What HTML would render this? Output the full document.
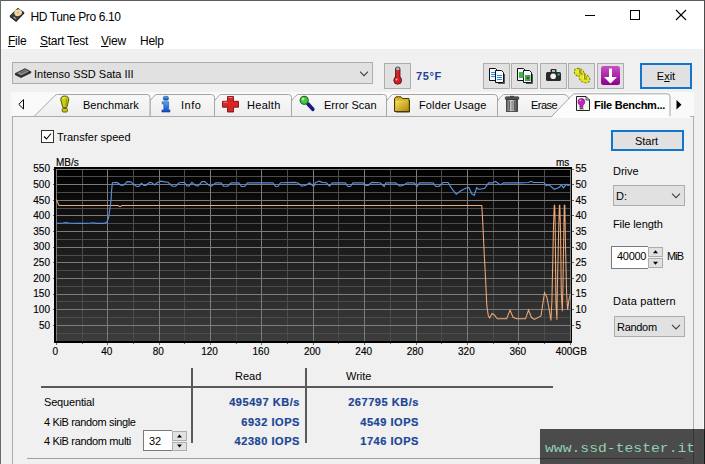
<!DOCTYPE html>
<html>
<head>
<meta charset="utf-8">
<title>HD Tune Pro 6.10</title>
<style>
html,body{margin:0;padding:0;}
body{width:705px;height:464px;overflow:hidden;background:#f0f0f0;position:relative;font-family:"Liberation Sans",sans-serif;font-size:11px;color:#000;}
.a{position:absolute;white-space:nowrap;}
.t{position:absolute;white-space:nowrap;line-height:14px;height:14px;}
#titlebar{left:0;top:0;width:705px;height:49px;background:#fff;}
#bt{left:0;top:0;width:705px;height:1px;background:#5c5c5c;}
#bl{left:0;top:0;width:1px;height:464px;background:#6a6a6a;}
#br{left:704px;top:0;width:1px;height:464px;background:#4c4c4c;}
#br2{left:703px;top:49px;width:1px;height:415px;background:#fafafa;}
.menu{font-size:12px;top:34px;letter-spacing:-0.25px;}
.combo{background:#e1e1e1;border:1px solid #adadad;box-sizing:border-box;}
.btn{background:#e1e1e1;border:1px solid #adadad;box-sizing:border-box;}
.btnb{background:#e1e1e1;border:2px solid #1276cc;box-sizing:border-box;text-align:center;}
.edit{background:#fff;border:1px solid #7a7a7a;box-sizing:border-box;}
.spin{background:#e1e1e1;border:1px solid #adadad;box-sizing:border-box;}
.ax{font-size:10px;line-height:12px;height:12px;-webkit-text-stroke:0.15px #000;}
.axl{text-align:right;width:40px;left:10px;}
.axr{text-align:left;left:575.5px;}
.axb{text-align:center;width:40px;top:346px;}
.val{font-weight:bold;color:#1c4595;-webkit-text-stroke:0.2px #1c4595;text-align:right;font-size:11px;width:100px;letter-spacing:0.55px;}
.tabt{top:98px;}
</style>
</head>
<body>
<!-- window chrome -->
<div class="a" id="titlebar"></div>
<div class="a" id="bt"></div>
<div class="a" id="bl"></div>
<div class="a" id="br"></div>
<div class="a" id="br2"></div>

<!-- title -->
<div class="t" id="title" style="left:30.5px;top:10px;font-size:12px;letter-spacing:-0.38px;">HD Tune Pro 6.10</div>
<svg class="a" style="left:0;top:0;" width="705" height="50" viewBox="0 0 705 50">
  <!-- app icon -->
  <g id="appicon">
    <path d="M9.800,15.800 L17.800,8.100 L24.200,12.300 L24.200,13.500 L16.200,22 L9.800,17 Z" fill="#1e1e1e"/>
    <path d="M9.800,15.800 L17.800,8.100 L24.200,12.300 L16.200,21 Z" fill="#3a3a3a"/>
    <ellipse cx="18.100" cy="12.700" rx="3.900" ry="3.300" fill="#f0d8a4" transform="rotate(-20 18.100 12.700)"/>
    <circle cx="18.100" cy="12.700" r="1.200" fill="#eab080"/>
    <path d="M14,16.500 L16.500,18.300 L15.500,19.300 L13,17.500 Z" fill="#9a9a9a"/>
  </g>
  <!-- caption buttons -->
  <g stroke="#000" stroke-width="1" fill="none" shape-rendering="crispEdges">
    <line x1="585" y1="15.5" x2="595" y2="15.5"/>
    <rect x="630.5" y="10.5" width="9" height="9"/>
  </g>
  <g stroke="#000" stroke-width="1.1" fill="none">
    <line x1="676" y1="10" x2="686" y2="20"/>
    <line x1="686" y1="10" x2="676" y2="20"/>
  </g>
</svg>

<!-- menu -->
<div class="t menu" style="left:8px;"><u>F</u>ile</div>
<div class="t menu" style="left:40px;"><u>S</u>tart Test</div>
<div class="t menu" style="left:101px;"><u>V</u>iew</div>
<div class="t menu" style="left:140px;">Help</div>

<!-- drive combobox -->
<div class="a combo" style="left:12px;top:62px;width:361px;height:22px;"></div>
<div class="t" id="drv" style="left:34px;top:67px;">Intenso SSD Sata III</div>

<!-- thermometer button + temp -->
<div class="a btn" style="left:384px;top:63px;width:27px;height:26px;"></div>
<div class="t" style="left:416px;top:69px;font-weight:bold;color:#1c4595;font-size:11px;letter-spacing:0.6px;">75°F</div>

<!-- toolbar buttons -->
<div class="a btn" style="left:483px;top:63px;width:27px;height:26px;"></div>
<div class="a btn" style="left:511px;top:63px;width:27px;height:26px;"></div>
<div class="a btn" style="left:540px;top:63px;width:27px;height:26px;"></div>
<div class="a btn" style="left:568px;top:63px;width:27px;height:26px;"></div>
<div class="a btn" style="left:597px;top:63px;width:27px;height:26px;"></div>

<!-- Exit -->
<div class="a btnb" style="left:640px;top:63px;width:52px;height:26px;"></div>
<div class="t" style="left:640px;top:69px;width:52px;text-align:center;">E<u>x</u>it</div>

<!-- tab strip -->
<div class="a" id="tabstrip" style="left:10px;top:92px;width:684px;height:24px;background:linear-gradient(90deg,#f3f3f3,#f9f9f9 3px);"></div>
<div class="a" id="page" style="left:12px;top:116px;width:682px;height:360px;border:1px solid #acacac;box-sizing:border-box;background:#f0f0f0;"></div>
<svg class="a" style="left:0;top:88px;" width="705" height="32" viewBox="0 88 705 32">
  <defs><linearGradient id="tg" x1="0" y1="0" x2="0" y2="1"><stop offset="0" stop-color="#f8f8f8"/><stop offset="1" stop-color="#eeeeee"/></linearGradient></defs>
  <g fill="url(#tg)" stroke="#a6a6a6" stroke-width="1">
    <path d="M497.5,116.5 L497.5,101 Q500,97 503.5,94.5 L564,94.500 Q567,94.500 568.500,97.500 L568.5,116.500 Z"/>
    <path d="M386.500,116.500 L386.500,101 Q389,97 392.500,94.500 L494.500,94.500 Q497.500,94.500 497.500,97.500 L497.500,116.500 Z"/>
    <path d="M291.500,116.500 L291.500,101 Q294,97 297.500,94.500 L383.500,94.500 Q386.500,94.500 386.500,97.500 L386.500,116.500 Z"/>
    <path d="M214.500,116.500 L214.500,101 Q217,97 220.500,94.500 L288.500,94.500 Q291.500,94.500 291.500,97.500 L291.500,116.500 Z"/>
    <path d="M150,116.500 L150,101 Q152.500,97 156,94.500 L211.500,94.500 Q214.500,94.500 214.500,97.500 L214.500,116.500 Z"/>
    <path d="M34,116.500 L55,95.500 Q56,94.500 57.500,94.500 L147,94.500 Q150,94.500 150,97.500 L150,116.500 Z"/>
  </g>
  <!-- selected tab -->
  <path d="M551.500,116.500 L572.500,94.800 Q573.500,93.800 575,93.800 L667,93.800 Q670,93.800 670,96.800 L670,116.500 Z" fill="#fcfcfc" stroke="none"/>
  <path d="M551.500,116.500 L572.500,94.800 Q573.500,93.800 575,93.800 L667,93.800 Q670,93.800 670,96.800 L670,116.500" fill="none" stroke="#a6a6a6" stroke-width="1"/>
  <!-- page top border -->
  <path d="M12,116.500 L551.500,116.500 M690,116.500 L694,116.500" stroke="#acacac" stroke-width="1" fill="none"/><path d="M670,116.500 L690,116.500" stroke="#fafafa" stroke-width="1" fill="none"/>
  <rect x="552.5" y="116" width="117" height="2" fill="#fcfcfc"/><rect x="669.5" y="117" width="23.500" height="1.200" fill="#f8f8f8"/>
  <!-- scroll arrows -->
  <path d="M23.500,99.700 L23.500,109 L18.800,104.350 Z" fill="none" stroke="#000" stroke-width="1"/>
  <path d="M676.500,100 L676.500,109.500 L681.500,104.750 Z" fill="#000"/>
</svg>
<div class="t tabt" style="left:83px;">Benchmark</div>
<div class="t tabt" style="left:181px;letter-spacing:0.5px;">Info</div>
<div class="t tabt" style="left:247px;letter-spacing:0.3px;">Health</div>
<div class="t tabt" style="left:324px;">Error Scan</div>
<div class="t tabt" style="left:419px;letter-spacing:0.12px;">Folder Usage</div>
<div class="t tabt" style="left:531px;letter-spacing:-0.55px;">Erase</div>
<div class="t tabt" style="left:594px;font-weight:bold;letter-spacing:-0.25px;">File Benchm...</div>


<!-- icons overlay -->
<svg class="a" style="left:0;top:56px;" width="705" height="62" viewBox="0 56 705 62">
  <defs>
    <linearGradient id="gy" x1="0" y1="0" x2="1" y2="1"><stop offset="0" stop-color="#f4e060"/><stop offset="1" stop-color="#b08808"/></linearGradient>
    <linearGradient id="gp" x1="0" y1="0" x2="0" y2="1"><stop offset="0" stop-color="#c850c8"/><stop offset="1" stop-color="#8a008a"/></linearGradient>
    <linearGradient id="gb" x1="0" y1="0" x2="0" y2="1"><stop offset="0" stop-color="#48b0e8"/><stop offset="1" stop-color="#1840c0"/></linearGradient>
    <linearGradient id="gt" x1="0" y1="0" x2="1" y2="0"><stop offset="0" stop-color="#555"/><stop offset="0.45" stop-color="#ddd"/><stop offset="1" stop-color="#333"/></linearGradient>
  </defs>
  <!-- drive icon in combobox -->
  <path d="M15,73.300 L25,68.300 L31.200,71.400 L31.200,73 L21,78 L15,75 Z" fill="#2e2e2e"/>
  <path d="M17,73.200 L25,69.300 L29.200,71.400 L21.200,75.400 Z" fill="#8a8a8a"/>
  <path d="M19.500,72.600 L24.800,70 L26.800,71 L21.500,73.700 Z" fill="#6a6a6a"/>
  <!-- combobox chevron -->
  <path d="M360,71.700 L364,75.700 L368,71.700" fill="none" stroke="#3c3c3c" stroke-width="1.05"/>
  <!-- thermometer -->
  <rect x="395.500" y="67" width="4.500" height="12" rx="2" fill="#d42020" stroke="#401010" stroke-width="0.8"/>
  <rect x="396" y="67.300" width="3.500" height="3" rx="1.500" fill="#78c8d8"/>
  <circle cx="397.700" cy="80.300" r="3.900" fill="#d42020" stroke="#401010" stroke-width="0.8"/>
  <rect x="396.200" y="74" width="3" height="5" fill="#d42020"/>
  <circle cx="396.500" cy="79.500" r="1" fill="#ffb0b0"/>
  <!-- copy text icon -->
  <g stroke="#111" stroke-width="1" fill="#f4f8ff">
    <path d="M489.500,68.500 L495.500,68.500 L497.500,70.500 L497.500,80.500 L489.500,80.500 Z"/>
    <path d="M495.500,70.500 L501.500,70.500 L503.500,72.500 L503.500,82.500 L495.500,82.500 Z"/>
  </g>
  <g stroke="#2a8ae0" stroke-width="1">
    <path d="M491,72.500 L495,72.500 M491,74.500 L495,74.500 M491,76.500 L495,76.500 M497,75.500 L502,75.500 M497,77.500 L502,77.500 M497,79.500 L502,79.500"/>
  </g>
  <path d="M498,83.500 L504.500,83.500 L504.500,74" stroke="#555" stroke-width="1" fill="none"/>
  <!-- copy image icon -->
  <g stroke="#111" stroke-width="1" fill="#f4f8ff">
    <path d="M517.500,68.500 L523.500,68.500 L525.500,70.500 L525.500,80.500 L517.500,80.500 Z"/>
    <path d="M523.500,70.500 L529.500,70.500 L531.500,72.500 L531.500,82.500 L523.500,82.500 Z"/>
  </g>
  <rect x="519" y="72" width="4.500" height="6" fill="#48b048"/>
  <rect x="525" y="75" width="5.500" height="6" fill="#48a048"/>
  <rect x="527" y="77" width="2" height="2" fill="#1a601a"/>
  <path d="M526,83.500 L532.500,83.500 L532.500,74" stroke="#555" stroke-width="1" fill="none"/>
  <!-- camera -->
  <rect x="546" y="72" width="15" height="9" rx="1.500" fill="#2a2a2a"/>
  <rect x="550.500" y="69" width="6" height="4" rx="1" fill="#2a2a2a"/>
  <rect x="552" y="70.200" width="3" height="1.500" fill="#e8e8e8"/>
  <circle cx="553.200" cy="76.300" r="2.800" fill="#f4f4f4"/>
  <circle cx="558.600" cy="74.500" r="1.200" fill="#20b050"/>
  <!-- yellow chips -->
  <g fill="#e4e428" stroke="#80800e" stroke-width="1" stroke-dasharray="2.2 1.2">
    <ellipse cx="579.200" cy="72.600" rx="5.300" ry="3.900" transform="rotate(28 579.200 72.600)"/>
    <ellipse cx="584.400" cy="78.300" rx="5.800" ry="4.100" transform="rotate(28 584.400 78.300)"/>
  </g>
  <path d="M579.300,68.300 L579.300,73.500 M580.800,70 L580.800,74 M584.600,74.200 L584.600,79.500 M586.100,76 L586.100,80" stroke="#80800e" stroke-width="0.9"/>
  <path d="M578.200,70 L578.200,73 M583.500,76 L583.500,79" stroke="#f8f890" stroke-width="0.8"/>
  <!-- purple download -->
  <rect x="601" y="66" width="19" height="19" rx="2.500" fill="url(#gp)"/>
  <path d="M609,68.500 L612,68.500 L612,77 L617,77 L610.500,83.500 L604,77 L609,77 Z" fill="#fff"/>
  <!-- TAB ICONS -->
  <!-- benchmark exclamation -->
  <path d="M64.700,96 Q69,96 68.700,100 L66.800,107.600 L62.800,107.600 L60.800,100 Q60.500,96 64.700,96 Z" fill="#cccc14" stroke="#5c5c08" stroke-width="1"/>
  <rect x="62.200" y="108.400" width="5.200" height="3.600" rx="1.200" fill="#cccc14" stroke="#5c5c08" stroke-width="1"/>
  <path d="M63,99 Q63.300,97.400 65,97.500" stroke="#f4f49a" stroke-width="1.100" fill="none"/>
  <path d="M66.800,99 L65.800,106.500" stroke="#9a9a0c" stroke-width="1.200" fill="none"/>
  <!-- info i -->
  <rect x="163.300" y="96.300" width="5.200" height="4" rx="1.600" fill="url(#gb)" stroke="#1838a0" stroke-width="0.5"/>
  <path d="M162.200,101.700 L168.600,101.700 L168.600,109.900 L170,109.900 L170,112.100 L161.900,112.100 L161.900,109.900 L163.800,109.900 L163.800,103.900 L162.200,103.900 Z" fill="url(#gb)" stroke="#1838a0" stroke-width="0.5"/>
  <!-- health cross -->
  <path d="M227.500,96.500 L233.500,96.500 L233.500,101.300 L238.500,101.300 L238.500,107.200 L233.500,107.200 L233.500,112 L227.500,112 L227.500,107.200 L222.500,107.200 L222.500,101.300 L227.500,101.300 Z" fill="#d82424" stroke="#7a1010" stroke-width="0.9"/>
  <path d="M228.500,97.500 L232.500,97.500 M223.500,102.300 L227.500,102.300" stroke="#f08080" stroke-width="1"/>
  <!-- error scan magnifier -->
  <path d="M307.800,103.800 L312.800,109.300" stroke="#1a1a80" stroke-width="3.600" stroke-linecap="round"/>
  <circle cx="304.200" cy="100.300" r="4" fill="#48c848" stroke="#207020" stroke-width="1.200"/>
  <circle cx="303" cy="99" r="1.400" fill="#a8f0a8"/>
  <!-- folder -->
  <path d="M394.500,98.500 L396,96.800 L401,96.800 L402.500,98.500 L409,98.500 L409,111.500 L394.500,111.500 Z" fill="#d8b020" stroke="#4a3808" stroke-width="1"/>
  <rect x="395.500" y="100.500" width="13" height="10.500" fill="url(#gy)"/>
  <path d="M409.500,100 L409.500,112 L396,112" stroke="#4a3808" stroke-width="1" fill="none"/>
  <!-- trash -->
  <rect x="506.500" y="99.500" width="11" height="12" fill="url(#gt)" stroke="#333" stroke-width="0.8"/>
  <rect x="505.300" y="96.800" width="13.500" height="2.700" rx="0.800" fill="#555" stroke="#222" stroke-width="0.6"/>
  <rect x="510" y="95.800" width="4" height="1.400" fill="#444"/>
  <path d="M509.500,101 L509.500,110.500 M512,101 L512,110.500 M514.500,101 L514.500,110.500" stroke="#444" stroke-width="0.7"/>
  <!-- file benchmark page+bulb -->
  <path d="M576.500,96.500 L586,96.500 L589.500,100 L589.500,110.500 L576.500,110.500 Z" fill="#f6f6f0" stroke="#222" stroke-width="1"/>
  <path d="M586,96.500 L586,100 L589.500,100" fill="none" stroke="#222" stroke-width="0.8"/>
  <path d="M581.400,98.500 Q584.700,98.500 584.700,101.800 Q584.700,104 582.900,105.300 L582.900,107.300 L579.900,107.300 L579.900,105.300 Q578.100,104 578.100,101.800 Q578.100,98.500 581.400,98.500 Z" fill="#c424c4" stroke="#6a0a6a" stroke-width="0.7"/>
  <rect x="579.500" y="108" width="4" height="1.300" fill="#555"/>
  <circle cx="580.300" cy="100.300" r="0.900" fill="#f0a0f0"/>
</svg>

<!-- checkbox -->
<div class="a" style="left:41px;top:130px;width:13px;height:13px;box-sizing:border-box;border:1px solid #333;background:#fff;"></div>
<svg class="a" style="left:41px;top:130px;" width="13" height="13" viewBox="0 0 13 13"><path d="M3,6.500 L5.500,9 L10,3.500" fill="none" stroke="#000" stroke-width="1.1"/></svg>
<div class="t" style="left:57px;top:130px;">Transfer speed</div>

<!-- chart -->
<div class="a" id="chart" style="left:54px;top:167px;width:518px;height:176px;background:linear-gradient(#000,#3d3d3d);"></div>
<div class="t ax" style="left:56px;top:156.700px;">MB/s</div>
<div class="t ax" style="left:556px;top:156.700px;">ms</div>
<svg class="a" style="left:0;top:0;" width="705" height="464" viewBox="0 0 705 464">
<g stroke-width="1" shape-rendering="crispEdges"><g stroke="#4c4c4c"><line x1="82.5" y1="169" x2="82.5" y2="341.5"/><line x1="133.5" y1="169" x2="133.5" y2="341.5"/><line x1="184.5" y1="169" x2="184.5" y2="341.5"/><line x1="236.5" y1="169" x2="236.5" y2="341.5"/><line x1="287.5" y1="169" x2="287.5" y2="341.5"/><line x1="338.5" y1="169" x2="338.5" y2="341.5"/><line x1="390.5" y1="169" x2="390.5" y2="341.5"/><line x1="441.5" y1="169" x2="441.5" y2="341.5"/><line x1="493.5" y1="169" x2="493.5" y2="341.5"/><line x1="544.5" y1="169" x2="544.5" y2="341.5"/><line x1="56" y1="333.5" x2="571" y2="333.5"/><line x1="56" y1="317.5" x2="571" y2="317.5"/><line x1="56" y1="301.5" x2="571" y2="301.5"/><line x1="56" y1="286.5" x2="571" y2="286.5"/><line x1="56" y1="270.5" x2="571" y2="270.5"/><line x1="56" y1="255.5" x2="571" y2="255.5"/><line x1="56" y1="239.5" x2="571" y2="239.5"/><line x1="56" y1="223.5" x2="571" y2="223.5"/><line x1="56" y1="208.5" x2="571" y2="208.5"/><line x1="56" y1="192.5" x2="571" y2="192.5"/><line x1="56" y1="176.5" x2="571" y2="176.5"/></g><g stroke="#7c7c7c"><line x1="56.5" y1="169" x2="56.5" y2="341.5"/><line x1="107.5" y1="169" x2="107.5" y2="341.5"/><line x1="159.5" y1="169" x2="159.5" y2="341.5"/><line x1="210.5" y1="169" x2="210.5" y2="341.5"/><line x1="261.5" y1="169" x2="261.5" y2="341.5"/><line x1="313.5" y1="169" x2="313.5" y2="341.5"/><line x1="364.5" y1="169" x2="364.5" y2="341.5"/><line x1="416.5" y1="169" x2="416.5" y2="341.5"/><line x1="467.5" y1="169" x2="467.5" y2="341.5"/><line x1="518.5" y1="169" x2="518.5" y2="341.5"/><line x1="570.5" y1="169" x2="570.5" y2="341.5"/><line x1="56" y1="325.5" x2="571" y2="325.5"/><line x1="56" y1="309.5" x2="571" y2="309.5"/><line x1="56" y1="294.5" x2="571" y2="294.5"/><line x1="56" y1="278.5" x2="571" y2="278.5"/><line x1="56" y1="262.5" x2="571" y2="262.5"/><line x1="56" y1="247.5" x2="571" y2="247.5"/><line x1="56" y1="231.5" x2="571" y2="231.5"/><line x1="56" y1="215.5" x2="571" y2="215.5"/><line x1="56" y1="200.5" x2="571" y2="200.5"/><line x1="56" y1="184.5" x2="571" y2="184.5"/><line x1="56" y1="169.5" x2="571" y2="169.5"/></g><rect x="54" y="340.6" width="518" height="2.4" fill="#000" stroke="none"/><rect x="54" y="167" width="2" height="176" fill="#000" stroke="none"/><rect x="571" y="167" width="1" height="176" fill="#000" stroke="none"/><g stroke="#666"><line x1="56.5" y1="343" x2="56.5" y2="345.0"/><line x1="82.5" y1="343" x2="82.5" y2="344.0"/><line x1="107.5" y1="343" x2="107.5" y2="345.0"/><line x1="133.5" y1="343" x2="133.5" y2="344.0"/><line x1="159.5" y1="343" x2="159.5" y2="345.0"/><line x1="184.5" y1="343" x2="184.5" y2="344.0"/><line x1="210.5" y1="343" x2="210.5" y2="345.0"/><line x1="236.5" y1="343" x2="236.5" y2="344.0"/><line x1="261.5" y1="343" x2="261.5" y2="345.0"/><line x1="287.5" y1="343" x2="287.5" y2="344.0"/><line x1="313.5" y1="343" x2="313.5" y2="345.0"/><line x1="338.5" y1="343" x2="338.5" y2="344.0"/><line x1="364.5" y1="343" x2="364.5" y2="345.0"/><line x1="390.5" y1="343" x2="390.5" y2="344.0"/><line x1="416.5" y1="343" x2="416.5" y2="345.0"/><line x1="441.5" y1="343" x2="441.5" y2="344.0"/><line x1="467.5" y1="343" x2="467.5" y2="345.0"/><line x1="493.5" y1="343" x2="493.5" y2="344.0"/><line x1="518.5" y1="343" x2="518.5" y2="345.0"/><line x1="544.5" y1="343" x2="544.5" y2="344.0"/><line x1="570.5" y1="343" x2="570.5" y2="345.0"/><line x1="52.5" y1="325.5" x2="54" y2="325.5"/><line x1="572" y1="325.5" x2="573.5" y2="325.5"/><line x1="52.5" y1="309.5" x2="54" y2="309.5"/><line x1="572" y1="309.5" x2="573.5" y2="309.5"/><line x1="52.5" y1="294.5" x2="54" y2="294.5"/><line x1="572" y1="294.5" x2="573.5" y2="294.5"/><line x1="52.5" y1="278.5" x2="54" y2="278.5"/><line x1="572" y1="278.5" x2="573.5" y2="278.5"/><line x1="52.5" y1="262.5" x2="54" y2="262.5"/><line x1="572" y1="262.5" x2="573.5" y2="262.5"/><line x1="52.5" y1="247.5" x2="54" y2="247.5"/><line x1="572" y1="247.5" x2="573.5" y2="247.5"/><line x1="52.5" y1="231.5" x2="54" y2="231.5"/><line x1="572" y1="231.5" x2="573.5" y2="231.5"/><line x1="52.5" y1="215.5" x2="54" y2="215.5"/><line x1="572" y1="215.5" x2="573.5" y2="215.5"/><line x1="52.5" y1="200.5" x2="54" y2="200.5"/><line x1="572" y1="200.5" x2="573.5" y2="200.5"/><line x1="52.5" y1="184.5" x2="54" y2="184.5"/><line x1="572" y1="184.5" x2="573.5" y2="184.5"/><line x1="52.5" y1="169.5" x2="54" y2="169.5"/><line x1="572" y1="169.5" x2="573.5" y2="169.5"/></g></g>
<path d="M56.0,199.5 L57.5,202.0 L59.0,205.5 L118.0,205.5 L120.0,206.6 L122.0,205.5 L460.0,205.5 L481.8,205.5 L482.7,221.2 L484.2,253.3 L485.6,279.5 L486.8,305.7 L488.3,315.9 L489.7,317.9 L492.0,313.6 L494.4,315.0 L497.3,318.8 L506.6,318.8 L510.1,310.1 L513.0,317.3 L516.8,318.8 L525.5,318.8 L528.5,310.1 L531.4,317.3 L534.3,319.4 L541.0,315.9 L544.5,292.6 L546.8,297.0 L548.8,307.1 L550.9,320.5 L551.9,301.3 L552.8,260.0 L553.5,225.0 L554.3,205.2 L554.7,205.2 L555.2,225.0 L555.9,302.7 L556.9,319.7 L557.3,290.6 L558.0,260.0 L558.8,225.0 L559.4,205.2 L559.8,205.2 L560.5,230.0 L561.3,292.7 L562.3,311.2 L563.0,284.2 L563.5,250.0 L564.3,205.2 L564.8,205.2 L565.6,250.0 L566.6,292.7 L567.6,309.8 L569.0,299.8 L570.5,294.1" fill="none" stroke="#eea876" stroke-width="1.05"/>
<path d="M56.0,223.4 L62.0,223.2 L66.0,222.6 L70.0,223.3 L80.0,223.4 L90.0,223.3 L93.0,222.8 L96.0,223.3 L104.0,223.3 L106.7,222.5 L108.5,218.0 L110.0,208.0 L111.1,200.0 L111.6,190.4 L112.4,182.8 L117.0,182.4 L121.3,185.3 L123.8,185.0 L127.2,181.6 L130.6,181.9 L134.0,184.5 L136.6,186.5 L138.8,186.5 L141.4,183.3 L143.9,185.3 L146.0,185.3 L149.4,182.4 L151.9,182.8 L154.5,185.0 L157.0,182.8 L160.9,181.1 L164.7,181.9 L168.1,182.3 L172.3,186.2 L175.7,186.2 L179.1,182.8 L184.3,182.3 L186.8,185.7 L188.9,186.2 L191.9,182.3 L195.3,185.3 L197.9,186.2 L202.1,181.6 L204.7,181.6 L208.9,185.3 L211.5,186.2 L215.7,182.8 L221.0,182.8 L223.5,186.2 L227.8,186.2 L231.2,182.8 L238.8,182.8 L241.4,186.5 L244.8,186.5 L247.3,182.8 L272.9,182.8 L275.4,186.5 L278.0,186.5 L280.5,182.8 L295.0,182.4 L298.4,183.3 L301.8,186.2 L306.0,185.3 L309.5,182.8 L313.7,186.5 L315.4,182.8 L319.2,181.1 L322.2,182.4 L326.5,182.8 L329.4,186.2 L332.4,182.8 L345.3,182.8 L347.9,186.5 L350.4,186.5 L353.0,182.8 L363.2,182.8 L365.7,185.3 L368.3,185.3 L371.7,182.4 L380.2,182.8 L384.1,186.5 L385.8,182.8 L395.5,182.8 L399.8,186.2 L403.2,185.3 L407.4,182.8 L414.3,182.8 L417.1,186.5 L419.4,182.8 L433.0,182.8 L435.9,186.5 L438.9,186.5 L443.0,182.5 L448.0,182.5 L452.0,188.9 L456.3,194.2 L460.8,190.8 L465.8,188.3 L468.8,187.5 L471.8,193.8 L474.2,195.4 L476.7,187.5 L478.7,189.5 L484.7,188.3 L488.6,182.9 L492.6,182.9 L495.6,181.5 L500.6,184.9 L503.5,182.9 L519.4,182.9 L528.4,182.5 L531.3,181.3 L533.3,182.5 L544.2,182.5 L546.2,185.5 L549.2,184.9 L554.2,189.3 L559.1,187.5 L561.5,184.9 L563.5,187.9 L566.1,184.3 L568.1,185.5 L570.5,184.3" fill="none" stroke="#5b8fdc" stroke-width="1.15"/>
</svg><div class="t ax axl" style="top:319.6px;">50</div><div class="t ax axr" style="top:319.6px;">5</div><div class="t ax axl" style="top:304.0px;">100</div><div class="t ax axr" style="top:304.0px;">10</div><div class="t ax axl" style="top:288.3px;">150</div><div class="t ax axr" style="top:288.3px;">15</div><div class="t ax axl" style="top:272.7px;">200</div><div class="t ax axr" style="top:272.7px;">20</div><div class="t ax axl" style="top:257.1px;">250</div><div class="t ax axr" style="top:257.1px;">25</div><div class="t ax axl" style="top:241.4px;">300</div><div class="t ax axr" style="top:241.4px;">30</div><div class="t ax axl" style="top:225.8px;">350</div><div class="t ax axr" style="top:225.8px;">35</div><div class="t ax axl" style="top:210.2px;">400</div><div class="t ax axr" style="top:210.2px;">40</div><div class="t ax axl" style="top:194.5px;">450</div><div class="t ax axr" style="top:194.5px;">45</div><div class="t ax axl" style="top:178.9px;">500</div><div class="t ax axr" style="top:178.9px;">50</div><div class="t ax axl" style="top:163.3px;">550</div><div class="t ax axr" style="top:163.3px;">55</div><div class="t ax axb" style="left:35.4px;">0</div><div class="t ax axb" style="left:86.8px;">40</div><div class="t ax axb" style="left:138.2px;">80</div><div class="t ax axb" style="left:189.5px;">120</div><div class="t ax axb" style="left:240.9px;">160</div><div class="t ax axb" style="left:292.3px;">200</div><div class="t ax axb" style="left:343.7px;">240</div><div class="t ax axb" style="left:395.1px;">280</div><div class="t ax axb" style="left:446.4px;">320</div><div class="t ax axb" style="left:497.8px;">360</div><div class="t ax" style="left:555.7px;top:346px;">400GB</div>

<!-- right panel -->
<div class="a btnb" style="left:611px;top:130px;width:73px;height:21px;"></div>
<div class="t" style="left:610px;top:134px;width:73px;text-align:center;">Start</div>
<div class="t" style="left:613px;top:164px;">Drive</div>
<div class="a combo" style="left:613px;top:185px;width:72px;height:21px;"></div>
<div class="t" style="left:616px;top:189px;">D:</div>
<div class="t" style="left:613px;top:217px;letter-spacing:-0.1px;">File length</div>
<div class="a edit" style="left:611px;top:246px;width:37px;height:23px;border-right:none;"></div>
<div class="t" style="left:617px;top:249px;letter-spacing:-0.3px;">40000</div>
<div class="a spin" style="left:648px;top:247px;width:15px;height:10px;"></div>
<div class="a spin" style="left:648px;top:258px;width:15px;height:10px;"></div>
<div class="t" style="left:667px;top:249px;letter-spacing:-0.9px;">MiB</div>
<div class="t" style="left:613px;top:294px;letter-spacing:0.2px;">Data pattern</div>
<div class="a combo" style="left:614px;top:316px;width:71px;height:21px;"></div>
<div class="t" style="left:617px;top:320px;letter-spacing:-0.3px;">Random</div>

<!-- results table -->
<div class="a" style="left:41px;top:386px;width:512px;height:2px;background:#5a5a5a;"></div>
<div class="a" style="left:191px;top:368px;width:2px;height:75px;background:#5a5a5a;"></div>
<div class="a" style="left:305px;top:368px;width:2px;height:75px;background:#5a5a5a;"></div>
<div class="t" style="left:235px;top:369px;">Read</div>
<div class="t" style="left:346px;top:369px;">Write</div>
<div class="t" style="left:44px;top:395px;letter-spacing:-0.17px;">Sequential</div>
<div class="t" style="left:44px;top:415px;letter-spacing:-0.36px;">4 KiB random single</div>
<div class="t" style="left:44px;top:434px;letter-spacing:-0.34px;">4 KiB random multi</div>
<div class="a edit" style="left:143px;top:430px;width:29px;height:21px;border-right:none;"></div>
<div class="t" style="left:149px;top:434px;">32</div>
<div class="a spin" style="left:172px;top:431px;width:15px;height:10px;"></div>
<div class="a spin" style="left:172px;top:442px;width:15px;height:9px;"></div>
<div class="t val" style="left:200px;top:395px;"><span class="vs">495497 KB/s</span></div>
<div class="t val" style="left:200px;top:415px;"><span class="vs">6932 IOPS</span></div>
<div class="t val" style="left:200px;top:434px;"><span class="vs">42380 IOPS</span></div>
<div class="t val" style="left:319px;top:395px;"><span class="vs">267795 KB/s</span></div>
<div class="t val" style="left:319px;top:415px;"><span class="vs">4549 IOPS</span></div>
<div class="t val" style="left:319px;top:434px;"><span class="vs">1746 IOPS</span></div>
<div class="a" style="left:27px;top:458px;width:657px;height:1px;background:#a0a0a0;"></div>


<svg class="a" style="left:600px;top:120px;" width="105" height="230" viewBox="600 120 105 230">
  <path d="M672,193.700 L676,197.700 L680,193.700" fill="none" stroke="#3c3c3c" stroke-width="1.05"/>
  <path d="M672,324.900 L676,328.900 L680,324.900" fill="none" stroke="#3c3c3c" stroke-width="1.05"/>
  <path d="M653,253.300 L655.500,250.300 L658,253.300 Z" fill="#000"/>
  <path d="M653,261.700 L655.500,264.700 L658,261.700 Z" fill="#000"/>
</svg>
<svg class="a" style="left:170px;top:428px;" width="20" height="26" viewBox="170 428 20 26">
  <path d="M177,437.500 L179.500,434.500 L182,437.500 Z" fill="#000"/>
  <path d="M177,444.500 L179.500,447.500 L182,444.500 Z" fill="#000"/>
</svg>

<!-- watermark -->
<div class="a" style="left:540px;top:429px;width:165px;height:35px;background:rgba(0,0,0,0.69);"></div>
<div class="t" id="wm" style="left:545px;top:438.6px;font-family:'Liberation Mono',monospace;font-size:13px;line-height:20px;height:20px;color:#8fd0b0;transform-origin:0 0;transform:scaleX(1.132);">www.ssd-tester.it</div>
</body>
</html>
